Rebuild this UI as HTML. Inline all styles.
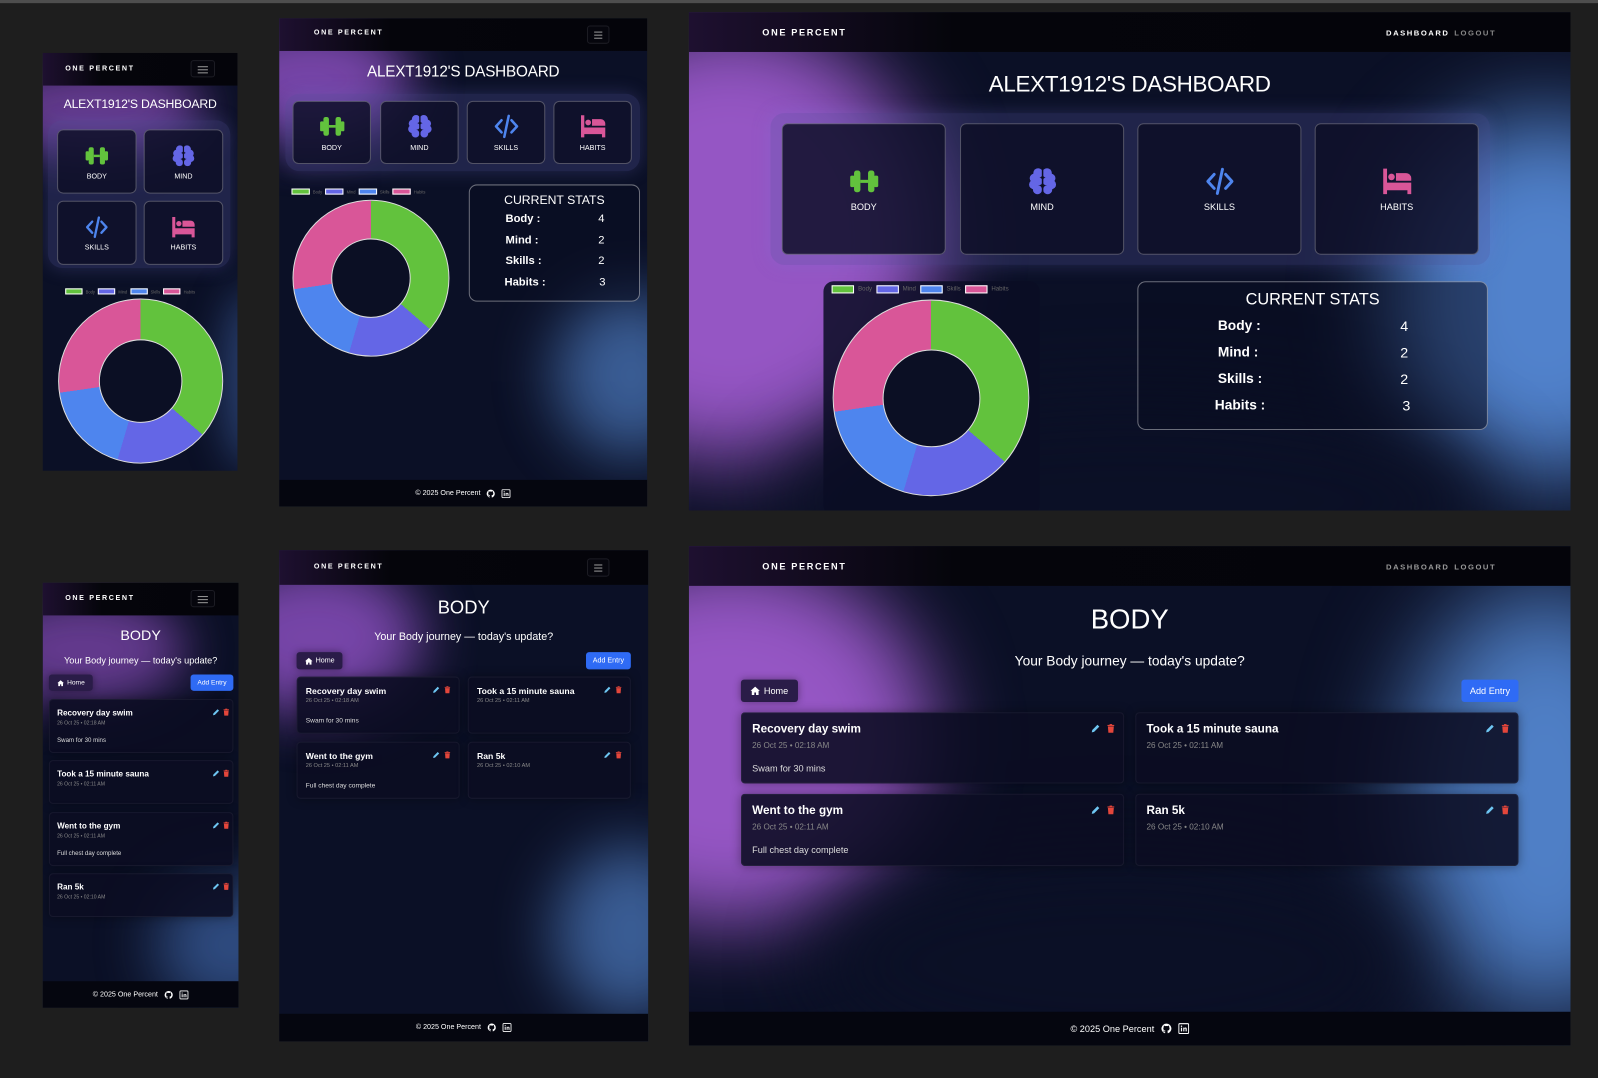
<!DOCTYPE html>
<html><head><meta charset="utf-8">
<style>
*{box-sizing:border-box;margin:0;padding:0}
html,body{width:1598px;height:1078px;overflow:hidden;background:#1e1e1e;font-family:"Liberation Sans",sans-serif;color:#fff}
#wrap{position:absolute;left:0;top:0;width:1568px;height:1058px;transform:scale(1.01913,1.0189);transform-origin:0 0}
.line{position:absolute;left:0;width:1568px;height:3px;background:#4e4e4e}
.p{position:absolute;overflow:hidden;background:#0b1026}
.blob{position:absolute;border-radius:50%}
.nav{position:absolute;left:0;top:0;width:100%;background:linear-gradient(90deg,#1e1030 0%,#05050b 30%,#04040a 100%);z-index:2}
.brand{position:absolute;font-weight:bold;letter-spacing:1.6px;color:#fff}
.ham{position:absolute;border:1px solid #1c1c24;border-radius:3px;background:#06060d}
.ham i{position:absolute;left:28%;width:44%;height:1px;background:#999}
.links{position:absolute;font-weight:bold;letter-spacing:1.5px;font-size:7.5px}
.title{position:absolute;left:0;width:100%;text-align:center;color:#fff;z-index:1}
.cont{position:absolute;border-radius:14px;background:rgba(90,90,170,.28);box-shadow:0 0 18px rgba(120,120,220,.25)}
.dc{position:absolute;border:1px solid rgba(255,255,255,.28);border-radius:6px;background:rgba(12,14,36,.82);display:flex;flex-direction:column;align-items:center;justify-content:center;color:#fff}
.dc span{margin-top:5px}
.leg{position:absolute;display:flex;align-items:center;color:#666}
.leg b{display:inline-block;border:1px solid #fff}
.donut{position:absolute;border-radius:50%;border:1px solid #ddd;background:conic-gradient(#62c23d 0 130.9deg,#6466e6 130.9deg 196.4deg,#4e85ee 196.4deg 261.8deg,#d95698 261.8deg 360deg)}
.donut i{position:absolute;left:50%;top:50%;border-radius:50%;background:#0b0f24;border:1px solid #ddd;transform:translate(-50%,-50%)}
.stats{position:absolute;border:1px solid rgba(255,255,255,.4);border-radius:8px;background:rgba(10,12,32,.55)}
.stats .h{position:absolute;left:0;width:100%;text-align:center}
.stats .r{position:absolute;font-weight:bold}
.stats .v{position:absolute}
.foot{position:absolute;left:0;width:100%;background:#05060f;display:flex;align-items:center;justify-content:center;gap:6px;z-index:2}
.btn{position:absolute;border-radius:3px;display:flex;align-items:center;justify-content:center;gap:3px;color:#fff}
.home{background:#2a1c48;box-shadow:0 0 8px rgba(0,0,0,.4)}
.add{background:#2f6bf5}
.en{position:absolute;background:rgba(11,13,34,.88);border-radius:4px;box-shadow:0 0 10px rgba(0,0,0,.35);border:1px solid rgba(255,255,255,.05)}
.en .t{position:absolute;font-weight:bold;color:#fff;white-space:nowrap}
.en .d{position:absolute;color:#888;white-space:nowrap}
.en .x{position:absolute;color:#ddd;white-space:nowrap}
.en .ic{position:absolute;display:flex}
svg{display:block}
</style></head><body>
<svg width="0" height="0" style="position:absolute">
<defs>
<symbol id="db" viewBox="0 0 24 24"><rect x="1" y="7.5" width="3.5" height="9" rx="1.2"/><rect x="4" y="3.5" width="5" height="17" rx="2"/><rect x="15" y="3.5" width="5" height="17" rx="2"/><rect x="19.5" y="7.5" width="3.5" height="9" rx="1.2"/><rect x="9" y="10.8" width="6" height="2.4"/></symbol>
<symbol id="br" viewBox="0 0 24 24"><circle cx="8.5" cy="5.5" r="3.8"/><circle cx="5.5" cy="9.5" r="3.6"/><circle cx="5" cy="14.5" r="3.6"/><circle cx="8" cy="18.5" r="3.6"/><circle cx="9" cy="12" r="3"/><circle cx="15.5" cy="5.5" r="3.8"/><circle cx="18.5" cy="9.5" r="3.6"/><circle cx="19" cy="14.5" r="3.6"/><circle cx="16" cy="18.5" r="3.6"/><circle cx="15" cy="12" r="3"/><rect x="11.4" y="0" width="1.2" height="24" fill="#0c0e24"/></symbol>
<symbol id="cd" viewBox="0 0 24 24"><path d="M7.5 6.5L2.5 12l5 5.5M16.5 6.5l5 5.5-5 5.5M14 2.5L10 21.5" fill="none" stroke="currentColor" stroke-width="2.3" stroke-linecap="round" stroke-linejoin="round"/></symbol>
<symbol id="bd" viewBox="0 0 24 24"><path d="M1 2h3v11h19v9h-3v-3H4v3H1z"/><circle cx="7.5" cy="8.5" r="2.6"/><path d="M11 5.5h8a4 4 0 0 1 4 4v2H11z"/></symbol>
<symbol id="pn" viewBox="0 0 24 24"><path d="M3 21l1.2-5.5L16.5 3.2l4.3 4.3L8.5 19.8z" fill="#6ec6f2"/></symbol>
<symbol id="tr" viewBox="0 0 24 24"><path d="M5 7h14l-1.2 15H6.2z" fill="#e3463b"/><rect x="4" y="3.5" width="16" height="2.5" fill="#e3463b"/><rect x="9" y="1.5" width="6" height="2.5" fill="#e3463b"/></symbol>
<symbol id="hs" viewBox="0 0 24 24"><path d="M12 2L1 12h3v10h6v-6h4v6h6V12h3z" fill="#fff"/></symbol>
<symbol id="gh" viewBox="0 0 24 24"><path d="M12 1.5a10.5 10.5 0 0 0-3.3 20.5c.5.1.7-.2.7-.5v-2c-2.9.6-3.5-1.4-3.5-1.4-.5-1.2-1.2-1.5-1.2-1.5-1-.7.1-.6.1-.6 1 .1 1.6 1.1 1.6 1.1.9 1.6 2.5 1.2 3.1.9.1-.7.4-1.2.7-1.4-2.3-.3-4.8-1.200-4.8-5.2 0-1.1.4-2.1 1.1-2.8-.1-.3-.5-1.4.1-2.9 0 0 .9-.3 2.9 1.1a10 10 0 0 1 5.2 0c2-1.4 2.9-1.1 2.9-1.1.6 1.5.2 2.6.1 2.9.7.7 1.1 1.7 1.1 2.8 0 4-2.5 4.9-4.8 5.2.4.3.7 1 .7 2v2.9c0 .3.2.6.7.5A10.5 10.5 0 0 0 12 1.5z" fill="#fff"/></symbol>
<symbol id="li" viewBox="0 0 24 24"><rect x="1.5" y="1.5" width="21" height="21" rx="2" fill="none" stroke="#fff" stroke-width="2.2"/><rect x="6" y="10" width="2.5" height="8" fill="#fff"/><circle cx="7.25" cy="7" r="1.5" fill="#fff"/><path d="M11 10h2.4v1.2c.5-.9 1.5-1.4 2.6-1.4 2 0 2.5 1.3 2.5 3.2V18H16v-4.4c0-1-.2-1.8-1.2-1.800s-1.4.8-1.4 1.8V18H11z" fill="#fff"/></symbol>
</defs></svg>

<div id="wrap">
<div class="line" style="top:0"></div>
<div class="line" style="top:522"></div>
<div class="line" style="top:1048"></div>

<!-- Panel A -->
<div class="p" style="left:42px;top:52px;width:191px;height:410px">
 <div class="blob" style="left:-60px;top:10px;width:220px;height:90px;background:#7a45a8;filter:blur(22px);opacity:.8"></div>
 <div class="blob" style="left:175px;top:230px;width:60px;height:180px;background:#3d5f9e;filter:blur(20px);opacity:.6"></div>
 <div class="nav" style="height:32px"><div class="brand" style="left:22px;top:12px;font-size:7px">ONE PERCENT</div>
  <div class="ham" style="left:145px;top:7px;width:24px;height:17px"><i style="top:5px"></i><i style="top:8px"></i><i style="top:11px"></i></div></div>
 <div class="title" style="top:43px;font-size:12px;letter-spacing:-.2px">ALEXT1912'S DASHBOARD</div>
 <div class="cont" style="left:5px;top:66px;width:179px;height:145px"></div>
 <div class="dc" style="left:14px;top:75px;width:78px;height:63px;font-size:7px"><svg width="26" height="24" fill="#62c23d"><use href="#db"/></svg><span>BODY</span></div>
 <div class="dc" style="left:99px;top:75px;width:78px;height:63px;font-size:7px"><svg width="24" height="24" fill="#6466e6"><use href="#br"/></svg><span>MIND</span></div>
 <div class="dc" style="left:14px;top:145px;width:78px;height:63px;font-size:7px"><svg width="26" height="24" style="color:#4e85ee"><use href="#cd"/></svg><span>SKILLS</span></div>
 <div class="dc" style="left:99px;top:145px;width:78px;height:63px;font-size:7px"><svg width="26" height="24" fill="#d95698"><use href="#bd"/></svg><span>HABITS</span></div>
 <div class="leg" style="left:22px;top:231px;font-size:4px;gap:3px"><b style="width:17px;height:6px;background:#62c23d"></b>Body<b style="width:17px;height:6px;background:#6466e6"></b>Mind<b style="width:17px;height:6px;background:#4e85ee"></b>Skills<b style="width:17px;height:6px;background:#d95698"></b>Habits</div>
 <div class="donut" style="left:15px;top:241px;width:162px;height:162px"><i style="width:82px;height:82px"></i></div>
</div>

<!-- Panel B -->
<div class="p" style="left:274px;top:18px;width:361px;height:479px">
 <div class="blob" style="left:-70px;top:0px;width:200px;height:120px;background:#8a4fbf;filter:blur(26px);opacity:.85"></div>
 <div class="blob" style="left:270px;top:270px;width:150px;height:160px;background:#4670b0;filter:blur(30px);opacity:.8"></div>
 <div class="nav" style="height:32px"><div class="brand" style="left:34px;top:11px;font-size:7px">ONE PERCENT</div>
  <div class="ham" style="left:302px;top:7px;width:22px;height:18px"><i style="top:5px"></i><i style="top:8px"></i><i style="top:11px"></i></div></div>
 <div class="title" style="top:44px;font-size:15px;letter-spacing:-.2px">ALEXT1912'S DASHBOARD</div>
 <div class="cont" style="left:6px;top:74px;width:348px;height:76px"></div>
 <div class="dc" style="left:13px;top:81px;width:77px;height:62px;font-size:7px"><svg width="30" height="26" fill="#62c23d"><use href="#db"/></svg><span>BODY</span></div>
 <div class="dc" style="left:99px;top:81px;width:77px;height:62px;font-size:7px"><svg width="26" height="26" fill="#6466e6"><use href="#br"/></svg><span>MIND</span></div>
 <div class="dc" style="left:184px;top:81px;width:77px;height:62px;font-size:7px"><svg width="30" height="26" style="color:#4e85ee"><use href="#cd"/></svg><span>SKILLS</span></div>
 <div class="dc" style="left:269px;top:81px;width:77px;height:62px;font-size:7px"><svg width="30" height="26" fill="#d95698"><use href="#bd"/></svg><span>HABITS</span></div>
 <div class="leg" style="left:12px;top:167px;font-size:4px;gap:3px"><b style="width:18px;height:6px;background:#62c23d"></b>Body<b style="width:18px;height:6px;background:#6466e6"></b>Mind<b style="width:18px;height:6px;background:#4e85ee"></b>Skills<b style="width:18px;height:6px;background:#d95698"></b>Habits</div>
 <div class="donut" style="left:13px;top:178px;width:154px;height:154px"><i style="width:78px;height:78px"></i></div>
 <div class="stats" style="left:186px;top:163px;width:168px;height:115px">
  <div class="h" style="top:7px;font-size:12px">CURRENT STATS</div>
  <div class="r" style="left:35px;top:27px;font-size:11px">Body :</div><div class="v" style="left:126px;top:27px;font-size:11px">4</div>
  <div class="r" style="left:35px;top:48px;font-size:11px">Mind :</div><div class="v" style="left:126px;top:48px;font-size:11px">2</div>
  <div class="r" style="left:35px;top:68px;font-size:11px">Skills :</div><div class="v" style="left:126px;top:68px;font-size:11px">2</div>
  <div class="r" style="left:34px;top:89px;font-size:11px">Habits :</div><div class="v" style="left:127px;top:89px;font-size:11px">3</div>
 </div>
 <div class="foot" style="top:453px;height:26px;font-size:7px">© 2025 One Percent <svg width="9" height="9"><use href="#gh"/></svg><svg width="9" height="9"><use href="#li"/></svg></div>
</div>

<!-- Panel C -->
<div class="p" style="left:676px;top:12px;width:865px;height:489px">
 <div class="blob" style="left:-160px;top:10px;width:400px;height:430px;background:#9556c4;filter:blur(40px)"></div>
 <div class="blob" style="left:690px;top:100px;width:300px;height:360px;background:#5182cc;filter:blur(45px)"></div>
 <div class="blob" style="left:90px;top:380px;width:700px;height:200px;background:#0b1026;filter:blur(40px)"></div>
 <div class="nav" style="height:39px"><div class="brand" style="left:72px;top:15px;font-size:9px">ONE PERCENT</div>
  <div class="links" style="left:684px;top:16px;color:#fff">DASHBOARD</div><div class="links" style="left:751px;top:16px;color:#888">LOGOUT</div></div>
 <div class="title" style="top:58px;font-size:22px;letter-spacing:-.3px">ALEXT1912'S DASHBOARD</div>
 <div class="cont" style="left:80px;top:99px;width:706px;height:149px"></div>
 <div class="dc" style="left:91px;top:109px;width:161px;height:129px;font-size:9px"><svg width="38" height="30" fill="#62c23d"><use href="#db"/></svg><span>BODY</span></div>
 <div class="dc" style="left:266px;top:109px;width:161px;height:129px;font-size:9px"><svg width="30" height="30" fill="#6466e6"><use href="#br"/></svg><span>MIND</span></div>
 <div class="dc" style="left:440px;top:109px;width:161px;height:129px;font-size:9px"><svg width="38" height="30" style="color:#4e85ee"><use href="#cd"/></svg><span>SKILLS</span></div>
 <div class="dc" style="left:614px;top:109px;width:161px;height:129px;font-size:9px"><svg width="38" height="30" fill="#d95698"><use href="#bd"/></svg><span>HABITS</span></div>
 <div style="position:absolute;left:132px;top:264px;width:212px;height:230px;border-radius:10px;background:rgba(11,13,36,.85)"></div>
 <div class="leg" style="left:140px;top:268px;font-size:6px;gap:4px"><b style="width:22px;height:8px;background:#62c23d"></b>Body<b style="width:22px;height:8px;background:#6466e6"></b>Mind<b style="width:22px;height:8px;background:#4e85ee"></b>Skills<b style="width:22px;height:8px;background:#d95698"></b>Habits</div>
 <div class="donut" style="left:141px;top:282px;width:193px;height:193px"><i style="width:96px;height:96px"></i></div>
 <div class="stats" style="left:440px;top:264px;width:344px;height:146px">
  <div class="h" style="top:9px;font-size:16px">CURRENT STATS</div>
  <div class="r" style="left:78px;top:35px;font-size:13.5px">Body :</div><div class="v" style="left:257px;top:35px;font-size:14px">4</div>
  <div class="r" style="left:78px;top:61px;font-size:13.5px">Mind :</div><div class="v" style="left:257px;top:61px;font-size:14px">2</div>
  <div class="r" style="left:78px;top:87px;font-size:13.5px">Skills :</div><div class="v" style="left:257px;top:87px;font-size:14px">2</div>
  <div class="r" style="left:75px;top:113px;font-size:13.5px">Habits :</div><div class="v" style="left:259px;top:113px;font-size:14px">3</div>
 </div>
</div>

<!-- Panel D -->
<div class="p" style="left:42px;top:572px;width:192px;height:417px">
 <div class="blob" style="left:-60px;top:10px;width:200px;height:110px;background:#7a45a8;filter:blur(24px);opacity:.8"></div>
 <div class="blob" style="left:110px;top:290px;width:150px;height:130px;background:#3f66a8;filter:blur(30px);opacity:.7"></div>
 <div class="nav" style="height:32px"><div class="brand" style="left:22px;top:12px;font-size:7px">ONE PERCENT</div>
  <div class="ham" style="left:145px;top:7px;width:24px;height:17px"><i style="top:5px"></i><i style="top:8px"></i><i style="top:11px"></i></div></div>
 <div class="title" style="top:43px;font-size:14px">BODY</div>
 <div class="title" style="top:71px;font-size:9px">Your Body journey — today's update?</div>
 <div class="btn home" style="left:6px;top:90px;width:43px;height:16px;font-size:6.5px"><svg width="7" height="7"><use href="#hs"/></svg>Home</div>
 <div class="btn add" style="left:145px;top:90px;width:42px;height:16px;font-size:6.5px">Add Entry</div>
 <div class="en" style="left:6px;top:114px;width:181px;height:53px"><div class="t" style="left:7px;top:8px;font-size:8px">Recovery day swim</div><div class="d" style="left:7px;top:20px;font-size:5px">26 Oct 25 • 02:18 AM</div><div class="x" style="left:7px;top:37px;font-size:6px">Swam for 30 mins</div><div class="ic" style="left:159px;top:8px;gap:2px"><svg width="8" height="8"><use href="#pn"/></svg><svg width="8" height="8"><use href="#tr"/></svg></div></div>
 <div class="en" style="left:6px;top:174px;width:181px;height:43px"><div class="t" style="left:7px;top:8px;font-size:8px">Took a 15 minute sauna</div><div class="d" style="left:7px;top:20px;font-size:5px">26 Oct 25 • 02:11 AM</div><div class="ic" style="left:159px;top:8px;gap:2px"><svg width="8" height="8"><use href="#pn"/></svg><svg width="8" height="8"><use href="#tr"/></svg></div></div>
 <div class="en" style="left:6px;top:225px;width:181px;height:53px"><div class="t" style="left:7px;top:8px;font-size:8px">Went to the gym</div><div class="d" style="left:7px;top:20px;font-size:5px">26 Oct 25 • 02:11 AM</div><div class="x" style="left:7px;top:37px;font-size:6px">Full chest day complete</div><div class="ic" style="left:159px;top:8px;gap:2px"><svg width="8" height="8"><use href="#pn"/></svg><svg width="8" height="8"><use href="#tr"/></svg></div></div>
 <div class="en" style="left:6px;top:285px;width:181px;height:43px"><div class="t" style="left:7px;top:8px;font-size:8px">Ran 5k</div><div class="d" style="left:7px;top:20px;font-size:5px">26 Oct 25 • 02:10 AM</div><div class="ic" style="left:159px;top:8px;gap:2px"><svg width="8" height="8"><use href="#pn"/></svg><svg width="8" height="8"><use href="#tr"/></svg></div></div>
 <div class="foot" style="top:391px;height:26px;font-size:7px">© 2025 One Percent <svg width="9" height="9"><use href="#gh"/></svg><svg width="9" height="9"><use href="#li"/></svg></div>
</div>

<!-- Panel E -->
<div class="p" style="left:274px;top:540px;width:362px;height:482px">
 <div class="blob" style="left:-70px;top:10px;width:210px;height:150px;background:#8a4fbf;filter:blur(28px);opacity:.85"></div>
 <div class="blob" style="left:270px;top:290px;width:150px;height:170px;background:#4670b0;filter:blur(30px);opacity:.8"></div>
 <div class="nav" style="height:34px"><div class="brand" style="left:34px;top:13px;font-size:7px">ONE PERCENT</div>
  <div class="ham" style="left:302px;top:8px;width:22px;height:18px"><i style="top:5px"></i><i style="top:8px"></i><i style="top:11px"></i></div></div>
 <div class="title" style="top:46px;font-size:18px">BODY</div>
 <div class="title" style="top:79px;font-size:10.5px">Your Body journey — today's update?</div>
 <div class="btn home" style="left:17px;top:100px;width:45px;height:17px;font-size:7px"><svg width="8" height="8"><use href="#hs"/></svg>Home</div>
 <div class="btn add" style="left:301px;top:100px;width:44px;height:17px;font-size:7px">Add Entry</div>
 <div class="en" style="left:17px;top:124px;width:160px;height:56px"><div class="t" style="left:8px;top:8px;font-size:8.5px">Recovery day swim</div><div class="d" style="left:8px;top:20px;font-size:5.5px">26 Oct 25 • 02:18 AM</div><div class="x" style="left:8px;top:39px;font-size:6.5px">Swam for 30 mins</div><div class="ic" style="left:132px;top:8px;gap:3px"><svg width="8" height="8"><use href="#pn"/></svg><svg width="8" height="8"><use href="#tr"/></svg></div></div>
 <div class="en" style="left:185px;top:124px;width:160px;height:56px"><div class="t" style="left:8px;top:8px;font-size:8.5px">Took a 15 minute sauna</div><div class="d" style="left:8px;top:20px;font-size:5.5px">26 Oct 25 • 02:11 AM</div><div class="ic" style="left:132px;top:8px;gap:3px"><svg width="8" height="8"><use href="#pn"/></svg><svg width="8" height="8"><use href="#tr"/></svg></div></div>
 <div class="en" style="left:17px;top:188px;width:160px;height:56px"><div class="t" style="left:8px;top:8px;font-size:8.5px">Went to the gym</div><div class="d" style="left:8px;top:20px;font-size:5.5px">26 Oct 25 • 02:11 AM</div><div class="x" style="left:8px;top:39px;font-size:6.5px">Full chest day complete</div><div class="ic" style="left:132px;top:8px;gap:3px"><svg width="8" height="8"><use href="#pn"/></svg><svg width="8" height="8"><use href="#tr"/></svg></div></div>
 <div class="en" style="left:185px;top:188px;width:160px;height:56px"><div class="t" style="left:8px;top:8px;font-size:8.5px">Ran 5k</div><div class="d" style="left:8px;top:20px;font-size:5.5px">26 Oct 25 • 02:10 AM</div><div class="ic" style="left:132px;top:8px;gap:3px"><svg width="8" height="8"><use href="#pn"/></svg><svg width="8" height="8"><use href="#tr"/></svg></div></div>
 <div class="foot" style="top:455px;height:27px;font-size:7px">© 2025 One Percent <svg width="9" height="9"><use href="#gh"/></svg><svg width="9" height="9"><use href="#li"/></svg></div>
</div>

<!-- Panel F -->
<div class="p" style="left:676px;top:536px;width:865px;height:490px">
 <div class="blob" style="left:-160px;top:10px;width:400px;height:360px;background:#9556c4;filter:blur(40px)"></div>
 <div class="blob" style="left:700px;top:40px;width:280px;height:420px;background:#4f7fc6;filter:blur(50px)"></div>
 <div class="blob" style="left:120px;top:300px;width:600px;height:220px;background:#0b1026;filter:blur(40px)"></div>
 <div class="nav" style="height:39px"><div class="brand" style="left:72px;top:15px;font-size:9px">ONE PERCENT</div>
  <div class="links" style="left:684px;top:16px;color:#999">DASHBOARD</div><div class="links" style="left:751px;top:16px;color:#999">LOGOUT</div></div>
 <div class="title" style="top:57px;font-size:27px;font-weight:300">BODY</div>
 <div class="title" style="top:105px;font-size:13.5px">Your Body journey — today's update?</div>
 <div class="btn home" style="left:51px;top:131px;width:56px;height:22px;font-size:9px"><svg width="10" height="10"><use href="#hs"/></svg>Home</div>
 <div class="btn add" style="left:758px;top:131px;width:56px;height:22px;font-size:9px">Add Entry</div>
 <div class="en" style="left:51px;top:163px;width:376px;height:70px"><div class="t" style="left:10px;top:10px;font-size:11.5px">Recovery day swim</div><div class="d" style="left:10px;top:27px;font-size:8px">26 Oct 25 • 02:18 AM</div><div class="x" style="left:10px;top:49px;font-size:9px">Swam for 30 mins</div><div class="ic" style="left:342px;top:10px;gap:5px"><svg width="10" height="10"><use href="#pn"/></svg><svg width="10" height="10"><use href="#tr"/></svg></div></div>
 <div class="en" style="left:438px;top:163px;width:376px;height:70px"><div class="t" style="left:10px;top:10px;font-size:11.5px">Took a 15 minute sauna</div><div class="d" style="left:10px;top:27px;font-size:8px">26 Oct 25 • 02:11 AM</div><div class="ic" style="left:342px;top:10px;gap:5px"><svg width="10" height="10"><use href="#pn"/></svg><svg width="10" height="10"><use href="#tr"/></svg></div></div>
 <div class="en" style="left:51px;top:243px;width:376px;height:71px"><div class="t" style="left:10px;top:10px;font-size:11.5px">Went to the gym</div><div class="d" style="left:10px;top:27px;font-size:8px">26 Oct 25 • 02:11 AM</div><div class="x" style="left:10px;top:49px;font-size:9px">Full chest day complete</div><div class="ic" style="left:342px;top:10px;gap:5px"><svg width="10" height="10"><use href="#pn"/></svg><svg width="10" height="10"><use href="#tr"/></svg></div></div>
 <div class="en" style="left:438px;top:243px;width:376px;height:71px"><div class="t" style="left:10px;top:10px;font-size:11.5px">Ran 5k</div><div class="d" style="left:10px;top:27px;font-size:8px">26 Oct 25 • 02:10 AM</div><div class="ic" style="left:342px;top:10px;gap:5px"><svg width="10" height="10"><use href="#pn"/></svg><svg width="10" height="10"><use href="#tr"/></svg></div></div>
 <div class="foot" style="top:457px;height:33px;font-size:9px">© 2025 One Percent <svg width="11" height="11"><use href="#gh"/></svg><svg width="11" height="11"><use href="#li"/></svg></div>
</div>
</div>
</body></html>
